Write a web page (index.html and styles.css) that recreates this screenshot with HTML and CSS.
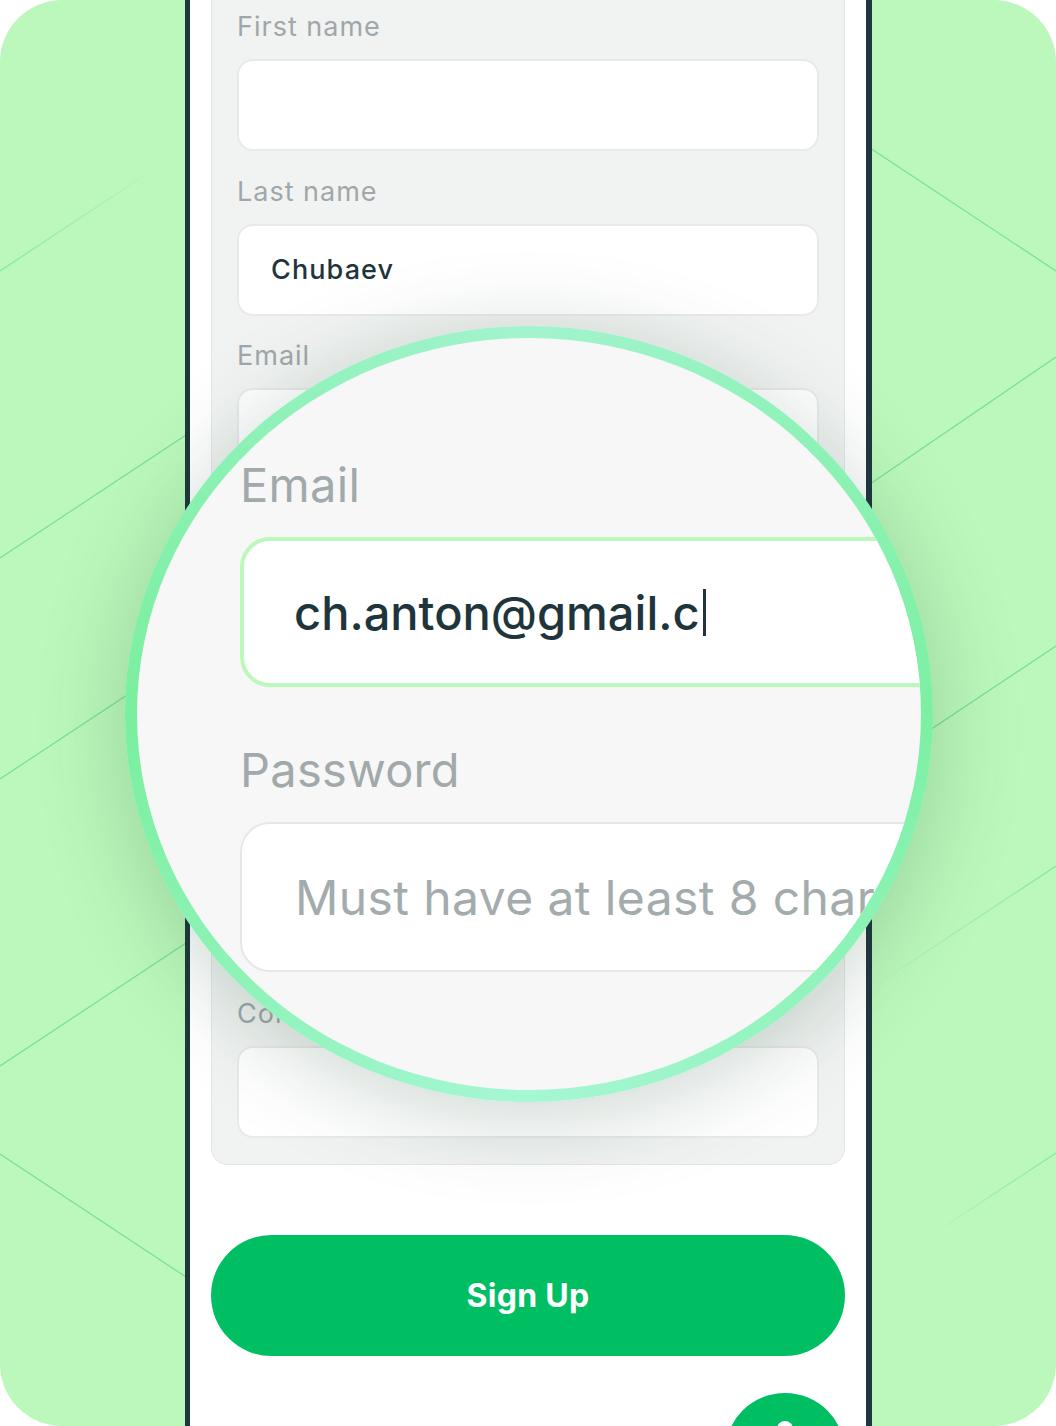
FILE: index.html
```html
<!DOCTYPE html>
<html lang="en">
<head>
<meta charset="utf-8">
<title>Sign up</title>
<link rel="stylesheet" href="styles.css">
</head>
<body>
<div class="card">
  <svg class="bg-lines" width="1056" height="1426" viewBox="0 0 1056 1426" aria-hidden="true">
    <defs>
      <linearGradient id="fadeR" x1="0" y1="0" x2="1" y2="0">
        <stop offset="0" stop-color="#6edd93" stop-opacity="0.8"/>
        <stop offset="1" stop-color="#6edd93" stop-opacity="0"/>
      </linearGradient>
      <linearGradient id="fadeL" x1="0" y1="0" x2="1" y2="0">
        <stop offset="0" stop-color="#6edd93" stop-opacity="0"/>
        <stop offset="1" stop-color="#6edd93" stop-opacity="0.8"/>
      </linearGradient>
    </defs>
    <g stroke="#6edd93" stroke-width="1.2" fill="none" opacity="0.9">
      <line x1="0" y1="271" x2="160" y2="165" stroke="url(#fadeR)"/>
      <line x1="0" y1="558" x2="186" y2="435"/>
      <line x1="0" y1="779" x2="186" y2="656"/>
      <line x1="0" y1="1066" x2="186" y2="943"/>
      <line x1="0" y1="1154" x2="186" y2="1277"/>
      <line x1="870" y1="148" x2="1056" y2="271"/>
      <line x1="870" y1="484" x2="1056" y2="357"/>
      <line x1="870" y1="770" x2="1056" y2="646"/>
      <line x1="870" y1="989" x2="1056" y2="866" stroke="url(#fadeL)"/>
      <line x1="930" y1="1236" x2="1056" y2="1153" stroke="url(#fadeL)"/>
    </g>
  </svg>

  <div class="phone">
    <div class="panel">
      <div class="field">
        <div class="label">First name</div>
        <div class="input"></div>
      </div>
      <div class="field">
        <div class="label">Last name</div>
        <div class="input"><span class="value">Chubaev</span></div>
      </div>
      <div class="field">
        <div class="label">Email</div>
        <div class="input"></div>
      </div>
      <div class="field under-lens">
        <div class="label">Password</div>
        <div class="input"></div>
      </div>
      <div class="field under-lens">
        <div class="label">Phone</div>
        <div class="input"></div>
      </div>
      <div class="field under-lens">
        <div class="label">Date of birth</div>
        <div class="input"></div>
      </div>
      <div class="field">
        <div class="label">Confirm password</div>
        <div class="input"></div>
      </div>
    </div>

    <button class="signup" type="button">Sign Up</button>

    <div class="fab-row">
      <div class="fab"><span class="fab-glyph"></span></div>
    </div>
  </div>

  <div class="magnifier">
    <div class="lens">
      <div class="zoom-content">
        <div class="z-label">Email</div>
        <div class="z-input z-active"><span class="z-value">ch.anton@gmail.c</span><span class="caret"></span></div>
        <div class="z-label z-label-pw">Password</div>
        <div class="z-input"><span class="z-ph">Must have at least 8 characters</span></div>
      </div>
    </div>
  </div>
</div>
</body>
</html>
```

FILE: styles.css
```css
* { box-sizing: border-box; }

html, body {
  margin: 0;
  padding: 0;
  background: #ffffff;
}

body {
  font-family: Inter, "Noto Sans", "Liberation Sans", sans-serif;
}

.card {
  position: relative;
  width: 1056px;
  height: 1426px;
  background: #bcf8bb;
  border-radius: 62px;
  overflow: hidden;
  padding-left: 185px;
}

.bg-lines {
  position: absolute;
  left: 0;
  top: 0;
}

.phone {
  position: relative;
  width: 687px;
  height: 1426px;
  background: #ffffff;
  border-left: 5px solid #20363e;
  border-right: 6px solid #20363e;
  padding: 0 21px;
  display: flex;
  flex-direction: column;
}

.panel {
  flex: none;
  margin-top: -16px;
  background: #f1f3f2;
  border: 1px solid #e4e7e7;
  border-radius: 16px;
  padding: 26px 25px 26px 25px;
  display: flex;
  flex-direction: column;
  gap: 24.5px;
}

.field {
  display: flex;
  flex-direction: column;
  gap: 16px;
}

.under-lens .label {
  visibility: hidden;
}

.label {
  height: 32px;
  line-height: 32px;
  font-size: 27px;
  letter-spacing: 1px;
  color: #9fa7aa;
  white-space: nowrap;
}

.input {
  height: 92px;
  background: #ffffff;
  border: 2px solid #e8eaea;
  border-radius: 16px;
  display: flex;
  align-items: center;
  padding-left: 32px;
}

.value {
  font-size: 27px;
  font-weight: 500;
  letter-spacing: 1.1px;
  color: #1f353c;
}

.signup {
  flex: none;
  display: block;
  margin-top: 70px;
  height: 121px;
  width: 100%;
  border: none;
  border-radius: 61px;
  background: #00bf63;
  color: #ffffff;
  font-family: Inter, "Noto Sans", sans-serif;
  font-weight: 700;
  font-size: 32px;
  letter-spacing: 0.3px;
  padding: 0;
}

.fab-row {
  flex: none;
  margin-top: 37px;
  display: flex;
  justify-content: flex-end;
}

.fab {
  width: 120px;
  height: 120px;
  border-radius: 50%;
  background: #00bf63;
  display: flex;
  justify-content: center;
  padding-top: 28px;
  flex: none;
}

.fab-glyph {
  width: 16px;
  height: 16px;
  border-radius: 50%;
  background: #ffffff;
}

/* Magnifier overlay */
.magnifier {
  position: absolute;
  left: 125px;
  top: 326px;
  width: 808px;
  height: 776px;
  border-radius: 50%;
  padding: 12px;
  background: conic-gradient(#a2f4cd 0deg, #7df0a3 90deg, #a6f7d4 180deg, #7aef9f 270deg, #a2f4cd 360deg);
  box-shadow: 0 14px 90px rgba(20, 70, 40, 0.22);
  z-index: 2;
}

.lens {
  width: 100%;
  height: 100%;
  border-radius: 50%;
  overflow: hidden;
  background: #f7f7f7;
}

.zoom-content {
  width: 1000px;
  padding-left: 103px;
  padding-top: 118px;
  display: flex;
  flex-direction: column;
  align-items: flex-start;
}

.z-label {
  height: 58px;
  line-height: 58px;
  font-size: 47px;
  letter-spacing: 0.3px;
  color: #a1a9ab;
  white-space: nowrap;
}

.z-label-pw {
  margin-top: 54px;
}

.z-input {
  margin-top: 23px;
  width: 900px;
  height: 150px;
  background: #ffffff;
  border: 2px solid #e6e8e8;
  border-radius: 30px;
  display: flex;
  align-items: center;
  padding-left: 53px;
  white-space: nowrap;
}

.z-active {
  border: 4px solid #bcf8bb;
  padding-left: 50px;
}

.z-value {
  font-size: 47px;
  font-weight: 500;
  color: #1f353c;
}

.caret {
  width: 3px;
  height: 47px;
  background: #1f353c;
  margin-left: 3px;
}

.z-ph {
  font-size: 48px;
  letter-spacing: 0.4px;
  color: #a3abad;
}
```
